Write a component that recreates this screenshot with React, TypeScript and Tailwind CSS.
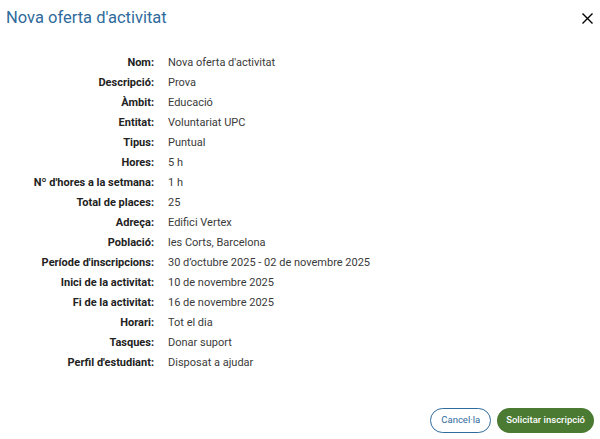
import React from "react";

type Row = {
  label: string;
  value: string;
};

const rows: Row[] = [
  { label: "Nom:", value: "Nova oferta d'activitat" },
  { label: "Descripció:", value: "Prova" },
  { label: "Àmbit:", value: "Educació" },
  { label: "Entitat:", value: "Voluntariat UPC" },
  { label: "Tipus:", value: "Puntual" },
  { label: "Hores:", value: "5 h" },
  { label: "Nº d'hores a la setmana:", value: "1 h" },
  { label: "Total de places:", value: "25" },
  { label: "Adreça:", value: "Edifici Vertex" },
  { label: "Població:", value: "les Corts, Barcelona" },
  { label: "Període d'inscripcions:", value: "30 d’octubre 2025 - 02 de novembre 2025" },
  { label: "Inici de la activitat:", value: "10 de novembre 2025" },
  { label: "Fi de la activitat:", value: "16 de novembre 2025" },
  { label: "Horari:", value: "Tot el dia" },
  { label: "Tasques:", value: "Donar suport" },
  { label: "Perfil d'estudiant:", value: "Disposat a ajudar" },
];

const App: React.FC = () => {
  return (
    <div className="flex h-[439px] w-[600px] flex-col bg-white font-['Roboto',sans-serif]">
      <div className="flex h-[37px] items-center justify-between pl-[6px] pr-[7px]">
        <h2 className="text-[16.5px] text-[#2f6b9c]">Nova oferta d'activitat</h2>
        <button className="flex h-[12px] w-[12px] items-center justify-center text-black">
          <svg width="11" height="11" viewBox="0 0 11 11">
            <path d="M0.5 0.5L10.5 10.5M10.5 0.5L0.5 10.5" stroke="currentColor" strokeWidth="1.4" />
          </svg>
        </button>
      </div>

      <div className="mt-[16px] flex flex-col">
        {rows.map((row) => (
          <div key={row.label} className="flex h-[20px] items-center text-[11px]">
            <div className="w-[154px] text-right font-bold text-[#222]">{row.label}</div>
            <div className="pl-[14px] text-[#3a3a3a]">{row.value}</div>
          </div>
        ))}
      </div>

      <div className="mt-auto flex justify-end gap-[6px] pb-[6px] pr-[6px]">
        <button className="h-[25px] rounded-full border border-[#2f6b9c] px-[10px] text-[9.5px] text-[#2f6b9c]">
          Cancel·la
        </button>
        <button className="h-[25px] rounded-full bg-[#4b7a32] px-[9px] text-[9.5px] font-medium text-white">
          Solicitar inscripció
        </button>
      </div>
    </div>
  );
};

export default App;
